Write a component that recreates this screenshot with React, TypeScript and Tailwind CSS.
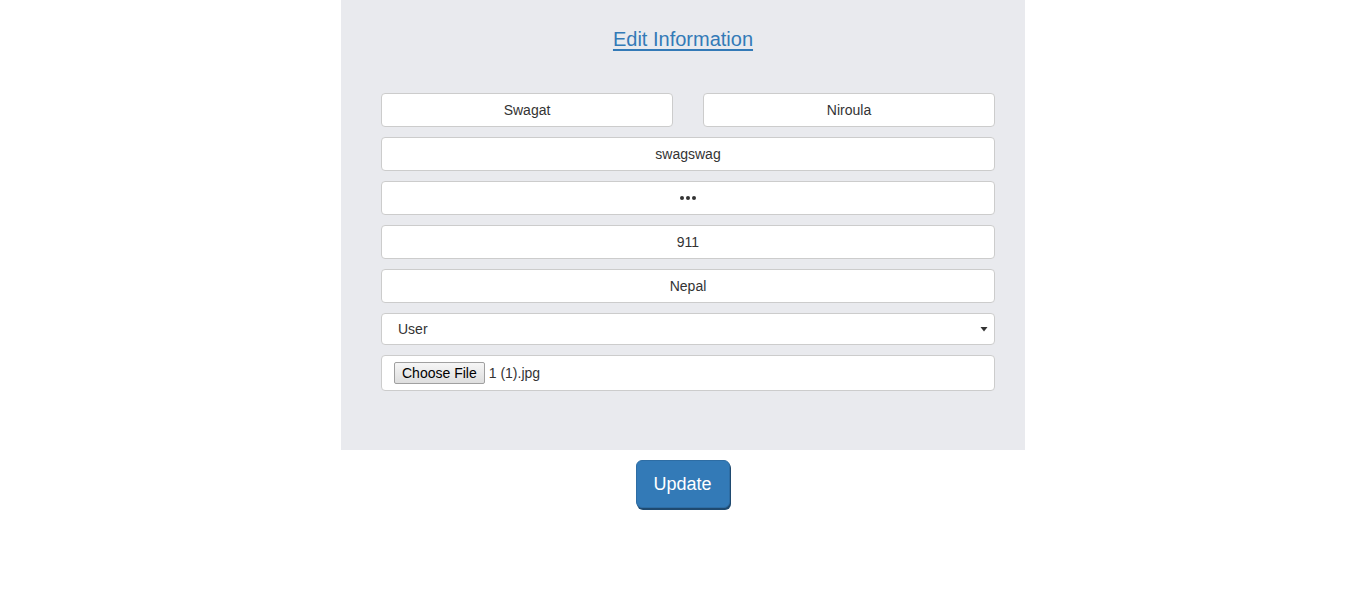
import React from "react";

const inputCls =
  "w-full h-[34px] bg-white border border-[#cccccc] rounded-[4px] text-center text-[14px] text-[#333333] outline-none";

export default function App() {
  return (
    <div className="w-[1366px] min-h-[602px] bg-white" style={{ fontFamily: '"Liberation Sans", Arial, sans-serif' }}>
      <div className="w-[684px] ml-[341px] bg-[#e9eaee] pt-[25px] pb-[59px]">
        <div className="text-center leading-[28px]">
          <a href="#" className="text-[20px] text-[#337ab7] underline underline-offset-[3px]">
            Edit Information
          </a>
        </div>
        <div className="mt-[38px] pl-[40px] pr-[30px] flex flex-col gap-[10px]">
          <div className="flex gap-[30px]">
            <input className={inputCls} defaultValue="Swagat" readOnly />
            <input className={inputCls} defaultValue="Niroula" readOnly />
          </div>
          <input className={inputCls} defaultValue="swagswag" readOnly />
          <div className="w-full h-[34px] bg-white border border-[#cccccc] rounded-[4px] flex items-center justify-center gap-[2px]">
            <span className="w-[4px] h-[4px] rounded-full bg-[#333]" />
            <span className="w-[4px] h-[4px] rounded-full bg-[#333]" />
            <span className="w-[4px] h-[4px] rounded-full bg-[#333]" />
          </div>
          <input className={inputCls} defaultValue="911" readOnly />
          <input className={inputCls} defaultValue="Nepal" readOnly />
          <div className="w-full h-[32px] bg-white border border-[#cccccc] rounded-[4px] flex items-center pl-[16px] pr-[6px] text-[14px] text-[#333]">
            <span className="flex-1">User</span>
            <svg width="8" height="6" viewBox="0 0 8 6">
              <path d="M0.5 1 L7.5 1 L4 5.5 Z" fill="#333" />
            </svg>
          </div>
          <div className="w-full h-[36px] bg-white border border-[#cccccc] rounded-[4px] flex items-center pl-[12px] text-[14px] text-[#333]">
            <span className="h-[22px] px-[7px] flex items-center border border-[#a0a0a0] rounded-[2px] bg-gradient-to-b from-[#f6f6f6] to-[#dedede] text-[14px] text-black">
              Choose File
            </span>
            <span className="ml-[4px]">1 (1).jpg</span>
          </div>
        </div>
      </div>
      <div className="flex justify-center mt-[10px] ml-[-1px]">
        <button className="w-[94px] h-[48px] bg-[#337ab7] border border-[#2e6da4] rounded-[6px] text-white text-[18px] shadow-[1px_2px_0_#1f4a70]">
          Update
        </button>
      </div>
    </div>
  );
}
